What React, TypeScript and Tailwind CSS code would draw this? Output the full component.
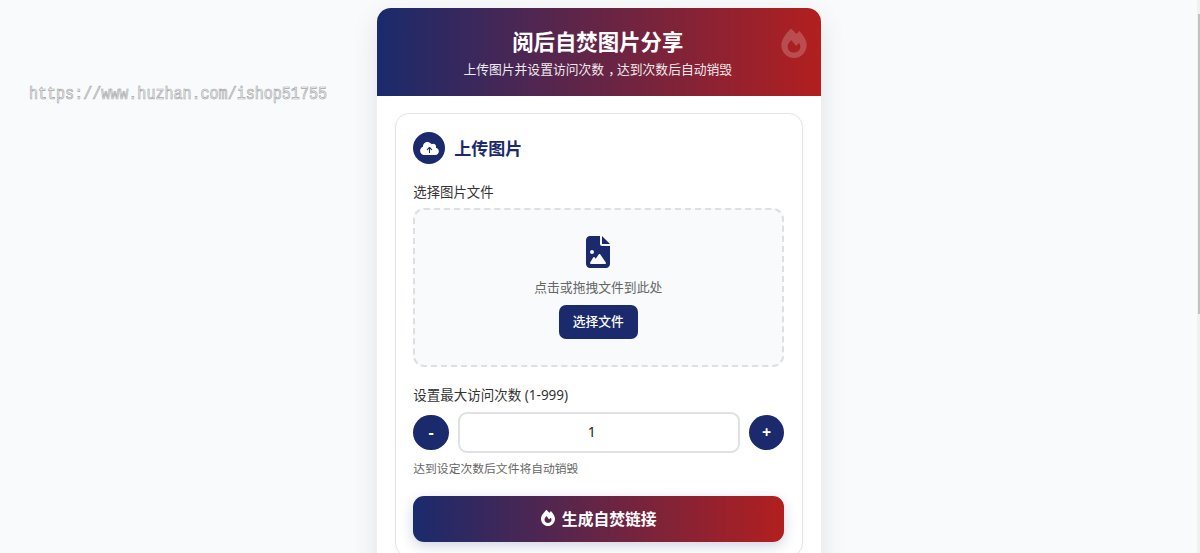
import { useState } from "react";
import { FaFileImage, FaFire } from "react-icons/fa6";

const font = "font-['Noto_Sans','Noto_Sans_CJK_SC',sans-serif]";

function CloudUpload() {
  return (
    <svg viewBox="0 0 640 512" className="h-[15px] w-[19px]" fill="currentColor">
      <path d="M0 336c0 79.500 64.500 144 144 144h368c70.700 0 128-57.300 128-128 0-61.900-44-113.600-102.400-125.400 4.100-10.700 6.400-22.400 6.400-34.600 0-53-43-96-96-96-19.700 0-38.100 6-53.300 16.200C367 64.200 315.300 32 256 32c-88.400 0-160 71.600-160 160 0 2.700.1 5.400.2 8.100C40.200 219.800 0 273.200 0 336z" />
      <path
        d="M320 390V228M246 292l74-74 74 74"
        fill="none"
        stroke="#1a2a6c"
        strokeWidth="38"
        strokeLinecap="round"
        strokeLinejoin="round"
      />
    </svg>
  );
}

function Header() {
  return (
    <header className="relative h-[88px] bg-linear-to-r/srgb from-[#1a2a6c] to-[#b21f1f] pt-[18px] pr-[2px] text-center text-white">
      <h1 className="text-[21.4px] leading-8 font-bold">阅后自焚图片分享</h1>
      <p className="mt-[2px] text-[12.8px] leading-[18px] opacity-90">
        上传图片并设置访问次数<span className="mr-[2.4px] ml-1 [font-feature-settings:'halt']">，</span>达到次数后自动销毁
      </p>
      <FaFire className="absolute top-[21px] right-[13.5px] h-[29px] w-[26px] opacity-20" />
    </header>
  );
}

function DropZone() {
  return (
    <div className="flex h-[159px] flex-col items-center rounded-[11px] border-2 border-dashed border-[#dcdfe3] bg-[#f8fafc] pt-[26px] pr-px">
      <FaFileImage className="h-8 w-6 text-[#1a2a6c]" />
      <p className="mt-[10px] text-[12.8px] leading-[18px] text-[#666]">点击或拖拽文件到此处</p>
      <button className="mt-[9px] h-[34px] w-[79px] rounded-[7px] bg-[#1a2a6c] text-[12.8px] font-medium text-white">
        选择文件
      </button>
    </div>
  );
}

function RoundButton({ label, onClick }: { label: string; onClick: () => void }) {
  return (
    <button
      onClick={onClick}
      className="flex size-[35.5px] shrink-0 items-center justify-center rounded-full bg-[#1a2a6c] pb-0.5 text-base font-bold text-white"
    >
      {label}
    </button>
  );
}

export default function App() {
  const [count, setCount] = useState(1);
  const clamp = (n: number) => Math.min(999, Math.max(1, n));

  return (
    <div className={`relative flex h-[553px] justify-center overflow-hidden bg-[#f8fafc] pr-[2.5px] pt-2 ${font}`}>
      <span className="absolute top-[84px] left-[29px] origin-center scale-y-[1.2] font-['Liberation_Mono',monospace] text-[15.05px] leading-5 text-[#f8fafc] [-webkit-text-stroke:0.6px_#a5a5a5]">
        https://www.huzhan.com/ishop51755
      </span>

      <main className="h-[700px] w-[443.5px] shrink-0 overflow-hidden rounded-t-[14px] bg-white shadow-[0_9px_27px_rgba(0,0,0,0.1)]">
        <Header />
        <div className="px-[17.75px] pt-[17px]">
          <section className="h-[444px] rounded-[14px] border border-[#e2e4e7] px-[17.5px] pt-[18px] shadow-[0_3px_9px_rgba(0,0,0,0.03)]">
            <div className="flex items-center gap-[9px]">
              <span className="flex size-8 items-center justify-center rounded-full bg-[#1a2a6c] text-white">
                <CloudUpload />
              </span>
              <h2 className="pt-px text-[17px] leading-[31px] font-bold text-[#1a2a6c]">上传图片</h2>
            </div>

            <div className="mt-[18px] mb-[6px] text-[13.4px] leading-5 text-[#333]">选择图片文件</div>
            <DropZone />

            <div className="mt-[18px] mb-[7px] text-[13.5px] leading-5 text-[#333]">
              设置最大访问次数 (1-999)
            </div>
            <div className="flex items-center gap-[9px]">
              <RoundButton label="-" onClick={() => setCount(clamp(count - 1))} />
              <input
                value={count}
                onChange={(e) => setCount(clamp(Number(e.target.value) || 1))}
                className="h-[41px] min-w-0 flex-1 rounded-[9px] border-2 border-[#dfe1e4] bg-white pr-[14px] pb-[3px] text-center text-[14.2px] text-[#222] outline-none"
              />
              <RoundButton label="+" onClick={() => setCount(clamp(count + 1))} />
            </div>
            <p className="mt-[6px] text-[11.8px] leading-[18px] text-[#666]">达到设定次数后文件将自动销毁</p>

            <button className="mt-[18.5px] flex h-[46px] w-full items-center justify-center gap-[7px] rounded-[11px] bg-linear-to-r/srgb from-[#1a2a6c] to-[#b21f1f] text-[15.8px] font-bold text-white shadow-[0_4px_13px_rgba(26,42,108,0.2)]">
              <FaFire className="mb-0.5 h-4 w-[14px]" />
              <span className="pt-0.5">生成自焚链接</span>
            </button>
          </section>
        </div>
      </main>

      <div className="absolute top-0 right-0 h-full w-[3px] bg-[#f1f1f1] pt-[14px] pl-px">
        <div className="h-[300px] w-full bg-[#c1c1c1]" />
      </div>
    </div>
  );
}
